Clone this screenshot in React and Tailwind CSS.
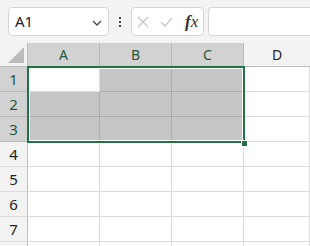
import React from 'react';

const cols = ['A', 'B', 'C', 'D'];
const rows = [1, 2, 3, 4, 5, 6, 7, 8];

const inSel = (r, c) => r <= 3 && c < 3;

const App = () => {
  return (
    <div className="w-[310px] h-[246px] overflow-hidden bg-white" style={{ fontFamily: '"Noto Sans", "Open Sans", sans-serif' }}>
      {/* Barre de formule */}
      <div className="h-[43px] bg-[#f3f3f3] flex items-center pl-[8px] gap-0">
        <div className="w-[101px] h-[29px] bg-white border border-[#d6d6d6] rounded-[4px] flex items-center pl-[6px] pr-[6px]">
          <span className="text-[15px] text-[#222] flex-1">A1</span>
          <svg width="10" height="6" viewBox="0 0 10 6" className="mt-[2px]">
            <path d="M1 1 L5 5 L9 1" fill="none" stroke="#444" strokeWidth="1.3" />
          </svg>
        </div>
        <div className="w-[22px] flex flex-col items-center gap-[2px]">
          <span className="w-[2px] h-[2px] bg-[#444]"></span>
          <span className="w-[2px] h-[2px] bg-[#444]"></span>
          <span className="w-[2px] h-[2px] bg-[#444]"></span>
        </div>
        <div className="w-[73px] h-[29px] bg-white border border-[#d6d6d6] rounded-[4px] flex items-center pl-[5px] gap-[11px]">
          <svg width="12" height="12" viewBox="0 0 12 12">
            <path d="M1 1 L11 11 M11 1 L1 11" stroke="#c4c4c4" strokeWidth="1.2" />
          </svg>
          <svg width="13" height="10" viewBox="0 0 13 10">
            <path d="M1 5 L5 9 L12 1" fill="none" stroke="#c4c4c4" strokeWidth="1.2" />
          </svg>
          <span className="text-[17px] italic text-[#333] leading-none ml-[1px]" style={{ fontFamily: '"Liberation Serif", serif' }}>
            <span className="font-bold">f</span>x
          </span>
        </div>
        <div className="ml-[4px] flex-1 h-[29px] bg-white border border-[#d6d6d6] rounded-l-[4px] border-r-0"></div>
      </div>

      {/* Grille */}
      <div className="relative">
        <div className="grid grid-cols-[28px_72px_72px_72px_1fr]">
          <div className="h-[24px] bg-[#f3f3f3] border-r border-b border-[#bdbdbd] flex items-end justify-end pr-[3px] pb-[3px]">
            <svg width="16" height="16" viewBox="0 0 16 16">
              <path d="M16 0 L16 16 L0 16 Z" fill="#bcbcbc" />
            </svg>
          </div>
          {cols.map((c, i) => (
            <div
              key={c}
              className={
                i < 3
                  ? 'h-[24px] bg-[#d2d2d2] border-r border-b border-b-[#217346] border-r-[#b8b8b8] flex items-center justify-center text-[14px] text-[#1e5a3a]'
                  : 'h-[24px] bg-[#f3f3f3] border-b border-[#bdbdbd] flex items-center justify-center text-[14px] text-[#222]'
              }
            >
              {c}
            </div>
          ))}
          {rows.map((r) => (
            <React.Fragment key={r}>
              <div
                className={
                  r <= 3
                    ? 'h-[25px] bg-[#d2d2d2] border-r border-r-[#217346] border-b border-b-[#b8b8b8] flex items-center justify-center text-[15px] text-[#1e5a3a]'
                    : 'h-[25px] bg-[#f3f3f3] border-r border-b border-r-[#bdbdbd] border-b-[#dadada] flex items-center justify-center text-[15px] text-[#222]'
                }
              >
                {r < 8 ? r : ''}
              </div>
              {cols.map((c, ci) => (
                <div
                  key={c}
                  className={
                    inSel(r, ci) && !(r === 1 && ci === 0)
                      ? 'h-[25px] bg-[#c6c6c6] border-r border-b border-[#ababab]'
                      : 'h-[25px] bg-white border-r border-b border-[#dadada]'
                  }
                ></div>
              ))}
            </React.Fragment>
          ))}
        </div>

        {/* Sélection */}
        <div className="absolute left-[27px] top-[23px] w-[218px] h-[77px] border-2 border-[#217346] pointer-events-none">
          <div className="w-full h-full border border-white"></div>
        </div>
        <div className="absolute left-[241px] top-[97px] w-[7px] h-[7px] bg-[#217346] border border-white"></div>
      </div>
    </div>
  );
};

export default App;
